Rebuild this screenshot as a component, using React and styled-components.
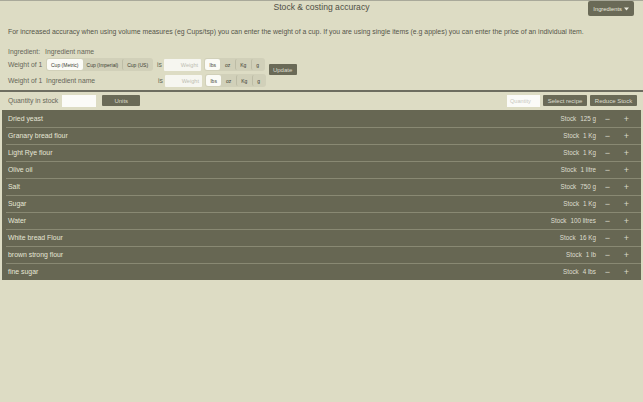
import React, { useState } from "react";
import styled, { createGlobalStyle } from "styled-components";

const GlobalStyle = createGlobalStyle`
  html, body {
    margin: 0;
    padding: 0;
    background: #dddcc4;
    font-family: "Liberation Sans", Arial, sans-serif;
  }
`;

const Page = styled.div`
  width: 643px;
  height: 402px;
  background: #dddcc4;
  border-top: 1px solid #a9a99a;
  box-sizing: border-box;
  color: #5a5a4c;
`;

const TitleBar = styled.div`
  position: relative;
  height: 22px;
  display: flex;
  justify-content: center;
`;

const Title = styled.h1`
  margin: 1px 0 0;
  font-size: 8.6px;
  font-weight: normal;
  color: #4f4f44;
`;

const MenuButton = styled.button`
  position: absolute;
  right: 9px;
  top: 0;
  height: 15px;
  padding: 0 5px;
  border: 0;
  border-radius: 2px;
  background: #6a6a57;
  color: #e9e9dc;
  font-family: inherit;
  font-size: 5.8px;
  display: flex;
  align-items: center;
  gap: 2px;
`;

const Intro = styled.p`
  margin: 5px 0 0 8px;
  font-size: 6.9px;
  color: #55554a;
  white-space: nowrap;
`;

const Form = styled.div`
  padding: 10px 8px 0;
  display: flex;
  flex-direction: column;
`;

const Row = styled.div`
  display: flex;
  align-items: center;
  height: 13px;
  font-size: 6.8px;
`;

const WeightBlock = styled.div`
  display: flex;
  align-items: flex-start;
`;

const WeightRows = styled.div`
  display: flex;
  flex-direction: column;
  gap: 3px;
`;

const Label = styled.span`
  width: ${(p) => p.w}px;
  flex-shrink: 0;
  color: #676759;
`;

const Value = styled.span`
  width: ${(p) => (p.w ? `${p.w}px` : "auto")};
  color: #676759;
`;

const Segmented = styled.div`
  display: flex;
  align-items: center;
  background: #d1d0b9;
  border-radius: 3px;
  padding: 1px;
  height: 13px;
  box-sizing: border-box;
`;

const Segment = styled.span`
  padding: 0 ${(p) => p.pad}px;
  height: 11px;
  display: flex;
  align-items: center;
  font-size: 5px;
  color: #3d3d34;
  border-radius: 2px;
  background: ${(p) => (p.active ? "#fbfbf6" : "transparent")};
  border-left: ${(p) => (p.divider ? "1px solid #bdbca6" : "none")};
`;

const Is = styled.span`
  width: 7px;
  margin-left: ${(p) => p.ml}px;
  color: #676759;
`;

const WeightInput = styled.div`
  width: 37px;
  height: 12px;
  margin-right: 3px;
  background: #f6f6f0;
  border-radius: 1px;
  display: flex;
  align-items: center;
  justify-content: flex-end;
  padding-right: 3px;
  box-sizing: border-box;
  font-size: 5.6px;
  color: #bdbdb2;
`;

const DarkButton = styled.button`
  height: ${(p) => p.h || 11}px;
  width: ${(p) => p.w}px;
  padding: 0;
  border: 0;
  border-radius: 1px;
  background: #6a6a57;
  color: #dcdccd;
  font-family: inherit;
  font-size: 6px;
  margin-top: ${(p) => p.mt || 0}px;
  margin-left: ${(p) => p.ml || 0}px;
  flex-shrink: 0;
`;

const Divider = styled.div`
  height: 2px;
  background: #6d6d60;
  margin-top: 3px;
`;

const Toolbar = styled.div`
  display: flex;
  align-items: center;
  padding: 2px 6px 0 8px;
  height: 13px;
  font-size: 6.8px;
  color: #676759;
`;

const SmallInput = styled.div`
  width: ${(p) => p.w}px;
  height: 12px;
  background: #fbfbf8;
  margin: 0 ${(p) => p.mr || 0}px 0 ${(p) => p.ml || 0}px;
  font-size: 5.6px;
  color: #c8c8c0;
  display: flex;
  align-items: center;
  padding-left: 3px;
  box-sizing: border-box;
`;

const Spacer = styled.div`
  flex: 1;
`;

const List = styled.ul`
  list-style: none;
  margin: 3px 2px 0 2px;
  padding: 0;
  background: #676753;
`;

const Item = styled.li`
  position: relative;
  height: 17px;
  display: flex;
  align-items: center;
  padding: 0 5px 0 6px;
  font-size: 6.9px;
  color: #e6e6d6;
  box-sizing: border-box;
  &::before {
    content: "";
    display: ${(p) => (p.first ? "none" : "block")};
    position: absolute;
    top: 0;
    left: 4px;
    right: 0;
    height: 1px;
    background: #898973;
  }
`;

const Name = styled.span`
  flex: 1;
`;

const Stock = styled.span`
  font-size: 6.3px;
  color: #deded0;
  margin-right: 2px;
  display: flex;
  gap: 4px;
`;

const Step = styled.span`
  width: 19px;
  text-align: center;
  font-size: 9px;
  color: #d8d8c8;
`;

const items = [
  ["Dried yeast", "125 g"],
  ["Granary bread flour", "1 Kg"],
  ["Light Rye flour", "1 Kg"],
  ["Olive oil", "1 litre"],
  ["Salt", "750 g"],
  ["Sugar", "1 Kg"],
  ["Water", "100 litres"],
  ["White bread Flour", "16 Kg"],
  ["brown strong flour", "1 lb"],
  ["fine sugar", "4 lbs"],
];

const UnitSwitch = ({ value }) => (
  <Segmented>
    {["lbs", "oz", "Kg", "g"].map((u, i) => (
      <Segment key={u} active={u === value} pad={4.5} divider={i > 1}>
        {u}
      </Segment>
    ))}
  </Segmented>
);

const App = () => {
  const [cup] = useState("Cup (Metric)");
  return (
    <Page>
      <GlobalStyle />
      <TitleBar>
        <Title>Stock &amp; costing accuracy</Title>
        <MenuButton>
          Ingredients
          <svg width="5" height="4" viewBox="0 0 5 4">
            <path d="M0 0.5 L5 0.5 L2.5 3.5 Z" fill="#e9e9dc" />
          </svg>
        </MenuButton>
      </TitleBar>
      <Intro>
        For increased accuracy when using volume measures (eg Cups/tsp) you can
        enter the weight of a cup. If you are using single items (e.g apples)
        you can enter the price of an individual item.
      </Intro>
      <Form>
        <Row>
          <Label w={37}>Ingredient:</Label>
          <Value>Ingredient name</Value>
        </Row>
        <WeightBlock>
          <WeightRows>
            <Row>
              <Label w={38}>Weight of 1</Label>
              <Segmented>
                {["Cup (Metric)", "Cup (Imperial)", "Cup (US)"].map((c, i) => (
                  <Segment key={c} active={c === cup} divider={i === 2} pad={4}>
                    {c}
                  </Segment>
                ))}
              </Segmented>
              <Is ml={4}>is</Is>
              <WeightInput>Weight</WeightInput>
              <UnitSwitch value="lbs" />
            </Row>
            <Row>
              <Label w={38}>Weight of 1</Label>
              <Value w={112}>Ingredient name</Value>
              <Is ml={0}>is</Is>
              <WeightInput>Weight</WeightInput>
              <UnitSwitch value="lbs" />
            </Row>
          </WeightRows>
          <DarkButton w={28} mt={6} ml={3}>
            Update
          </DarkButton>
        </WeightBlock>
      </Form>
      <Divider />
      <Toolbar>
        <span>Quantity in stock</span>
        <SmallInput w={34} ml={4} mr={6} />
        <DarkButton w={38}>Units</DarkButton>
        <Spacer />
        <SmallInput w={33}>Quantity</SmallInput>
        <DarkButton w={44} ml={3}>
          Select recipe
        </DarkButton>
        <DarkButton w={47} ml={3}>
          Reduce Stock
        </DarkButton>
      </Toolbar>
      <List>
        {items.map(([name, qty], i) => (
          <Item key={name} first={i === 0}>
            <Name>{name}</Name>
            <Stock>
              <span>Stock</span>
              <span>{qty}</span>
            </Stock>
            <Step>−</Step>
            <Step>+</Step>
          </Item>
        ))}
      </List>
    </Page>
  );
};

export default App;
